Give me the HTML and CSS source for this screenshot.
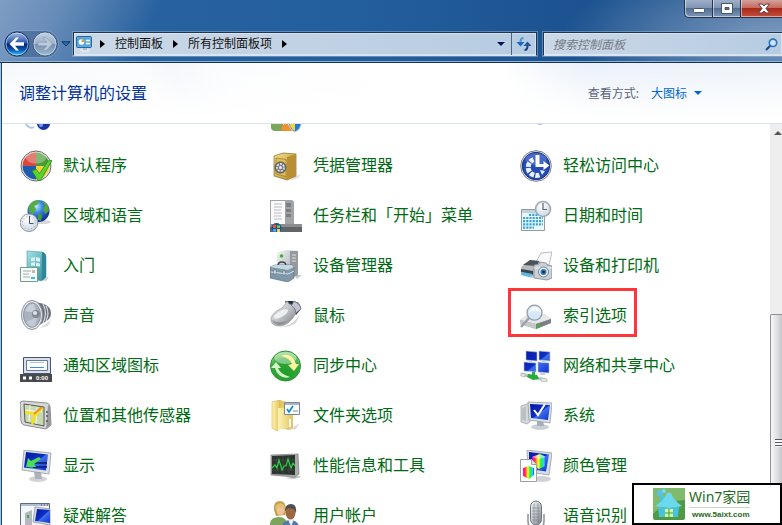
FILE: index.html
```html
<!DOCTYPE html>
<html lang="zh-CN">
<head>
    <meta charset="UTF-8">
    <meta name="viewport" content="width=device-width, initial-scale=1.0">
    <title>所有控制面板项</title>
    <link rel="stylesheet" href="styles.css">
</head>
<body>
    <!-- shared gradients -->
    <svg class="defs" aria-hidden="true">
        <defs>
            <linearGradient id="silver" x1="0" y1="0" x2="1" y2="1"><stop offset="0" stop-color="#f4f5f6"/><stop offset=".5" stop-color="#c2c5c9"/><stop offset="1" stop-color="#777b80"/></linearGradient>
            <linearGradient id="screen" x1="0" y1="0" x2="1" y2="1"><stop offset="0" stop-color="#0618a0"/><stop offset=".5" stop-color="#0c2fc4"/><stop offset=".55" stop-color="#3f6fe8"/><stop offset="1" stop-color="#0a2fd0"/></linearGradient>
            <radialGradient id="globe" cx=".4" cy=".3" r=".7"><stop offset="0" stop-color="#bfe6ff"/><stop offset=".4" stop-color="#3a8be0"/><stop offset="1" stop-color="#0b2c96"/></radialGradient>
            <radialGradient id="face" cx=".4" cy=".3" r=".8"><stop offset="0" stop-color="#fff"/><stop offset="1" stop-color="#c5d3df"/></radialGradient>
            <linearGradient id="gold" x1="0" y1="0" x2="1" y2="1"><stop offset="0" stop-color="#f3df8c"/><stop offset="1" stop-color="#b48a28"/></linearGradient>
            <linearGradient id="folder" x1="0" y1="0" x2="1" y2="0"><stop offset="0" stop-color="#fdf3b6"/><stop offset="1" stop-color="#e3c45a"/></linearGradient>
            <linearGradient id="teal" x1="0" y1="0" x2="1" y2="1"><stop offset="0" stop-color="#a5e3ea"/><stop offset="1" stop-color="#2a8796"/></linearGradient>
            <radialGradient id="green" cx=".5" cy=".75" r=".8"><stop offset="0" stop-color="#1c9c28"/><stop offset=".6" stop-color="#35a83a"/><stop offset="1" stop-color="#a9e39a"/></radialGradient>
            <linearGradient id="rainbow" x1="0" y1="0" x2="1" y2="0"><stop offset="0" stop-color="#f0f"/><stop offset=".2" stop-color="#f33"/><stop offset=".45" stop-color="#ff3"/><stop offset=".65" stop-color="#2e3"/><stop offset=".85" stop-color="#2df"/><stop offset="1" stop-color="#33f"/></linearGradient>
            <linearGradient id="back" x1="0" y1="0" x2="0" y2="1"><stop offset="0" stop-color="#a9bfe6"/><stop offset=".45" stop-color="#2c55ae"/><stop offset=".5" stop-color="#04236f"/><stop offset=".75" stop-color="#0a58b8"/><stop offset="1" stop-color="#3ad4ff"/></linearGradient>
            <linearGradient id="forward" x1="0" y1="0" x2="0" y2="1"><stop offset="0" stop-color="#c4d2e2"/><stop offset=".48" stop-color="#9db2c9"/><stop offset=".52" stop-color="#7390af"/><stop offset="1" stop-color="#a5bcd2"/></linearGradient>
        </defs>
    </svg>

    <div class="window">
        <header class="chrome">
            <div class="window-buttons">
                <button class="win-btn" aria-label="最小化"><svg width="14" height="12"><rect x="1.500" y="5.500" width="11" height="4" rx="1" fill="#fff" stroke="#46566c"/></svg></button>
                <button class="win-btn" aria-label="最大化"><svg width="14" height="12"><path d="M1.500 .5h11v10h-11z M5 4.500v2h4v-2z" fill="#fff" fill-rule="evenodd" stroke="#46566c"/></svg></button>
                <button class="win-btn close" aria-label="关闭"><svg width="14" height="12"><path d="M1.500 1h3.500l2 2 2-2h3.500l-3.500 4.500 3.500 4.500H9L7 8l-2 2H1.500L5 5.500z" fill="#fff" stroke="#5b3d48"/></svg></button>
            </div>
            <div class="nav-row">
                <div class="travel">
                    <button class="travel-btn" aria-label="后退"><svg width="26" height="26"><circle cx="13" cy="13" r="12" fill="url(#back)" stroke="#15305e"/><circle cx="13" cy="13" r="11" fill="none" stroke="#c7daf0" stroke-opacity=".7"/><path d="M5.500 13l6.500-6.500h3L11 11.200h9v3.600h-9l4 4.700h-3z" fill="#fff"/></svg></button>
                    <button class="travel-btn" aria-label="前进"><svg width="26" height="26"><circle cx="13" cy="13" r="12" fill="url(#forward)" stroke="#3f5d80"/><circle cx="13" cy="13" r="11" fill="none" stroke="#d3dfec" stroke-opacity=".7"/><path d="M20.500 13L14 6.500h-3l4 4.700H6v3.600h9l-4 4.700h3z" fill="#bccada" stroke="#7f98b3" stroke-width=".6"/></svg></button>
                </div>
                <button class="history" aria-label="最近的页面"><svg width="10" height="6"><path d="M1 .8h8L5 5z" fill="#2c74b8" stroke="#0d2f5c"/></svg></button>
                <nav class="address">
                    <svg class="cp-icon" width="17" height="17"><ellipse cx="9" cy="14.500" rx="5" ry="2" fill="#dfe5eb"/><path d="M7 11h4v3H7z" fill="#aebdca"/><rect x=".5" y=".5" width="15" height="11" rx="1" fill="#58a9dd" stroke="#27679c"/><circle cx="5.500" cy="6" r="2.800" fill="#fff"/><path d="M5.500 6V3.200A2.800 2.800 0 0 1 8.300 6z" fill="#f39a22"/><path d="M10 4.500h4M10 7.500h4" stroke="#fff" stroke-width="1.500"/></svg>
                    <i class="tri"></i>
                    <a href="#">控制面板</a>
                    <i class="tri"></i>
                    <a href="#">所有控制面板项</a>
                    <i class="tri"></i>
                    <button class="drop" aria-label="以前的位置"><i class="tri-down"></i></button>
                    <button class="refresh" aria-label="刷新"><svg width="16" height="14"><path d="M7.500 1C5 1 4.500 3 4.500 5" fill="none" stroke="#4a9ad5" stroke-width="2"/><path d="M.5 5h8l-4 4.500z" fill="#1d68bd"/><path d="M8.500 13c2.500 0 3-2 3-4" fill="none" stroke="#1a437f" stroke-width="2"/><path d="M7.500 9h8l-4-4.500z" fill="#1d58a8"/></svg></button>
                </nav>
                <div class="search">
                    <input type="text" aria-label="搜索" placeholder="搜索控制面板">
                    <svg width="13" height="13"><path d="M1 12l5-5" stroke="#1b4b94" stroke-width="2.200"/><circle cx="8" cy="4.800" r="3.700" fill="#cfe4f5" stroke="#2a72bb" stroke-width="1.600"/></svg>
                </div>
            </div>
        </header>

        <main class="content">
            <div class="heading">
                <h1>调整计算机的设置</h1>
                <div class="view-by">
                    <label for="view">查看方式:</label>
                    <select id="view"><option>大图标</option></select>
                    <i class="tri-down"></i>
                </div>
            </div>
            <div class="body">
                <div class="items">
                    <div class="item"><svg class="icon" viewBox="0 0 32 32"><path d="M5 22q4 8 9 5" fill="none" stroke="#a9c4ea" stroke-width="2"/><circle cx="23.500" cy="23.500" r="6.500" fill="#1a33a5"/><circle cx="21" cy="25" r="2" fill="#6fa0ee"/></svg></div>
                    <div class="item"><svg class="icon" viewBox="0 0 32 32"><path d="M1 22h12v9H5q-4 0-4-4z" fill="#7da55b"/><path d="M11 29q2-7 7-5l4 7h-9z" fill="#f0912d"/><path d="M19 20h12v5q-1 5-6 7-5-2-6-7z" fill="#2679d0" stroke="#ccc"/><path d="M25 20v11q-4-2-5-6v-5z" fill="#f6d13b"/></svg></div>
                    <div class="item"><svg class="icon" viewBox="0 0 32 32"><ellipse cx="20" cy="23.500" rx="3" ry="1.500" fill="#b9bcc1"/></svg></div>

                    <a class="item" href="#"><svg class="icon" viewBox="0 0 32 32"><circle cx="16" cy="16" r="15" fill="#eee" stroke="#666"/><path d="M16 16V2.500A13.500 13.500 0 0 0 2.500 16z" fill="#d8483c"/><path d="M16 16h13.500A13.500 13.500 0 0 0 16 2.500z" fill="#4c9a35"/><path d="M16 16H2.500A13.500 13.500 0 0 0 16 29.500z" fill="#1e5cae"/><path d="M16 16v13.500A13.500 13.500 0 0 0 29.500 16z" fill="#f5cf3c"/><ellipse cx="16" cy="8" rx="10" ry="5.500" fill="#fff" opacity=".3"/><path d="M12 21l4-2 3.500 4.500L28 11l4-.5-11.500 20h-2.500z" fill="#5cd32c" stroke="#1f8f16" stroke-width=".8"/></svg><span>默认程序</span></a>
                    <a class="item" href="#"><svg class="icon" viewBox="0 0 32 32"><path d="M25 27l6-3-3 4-9 3z" fill="#ccc" opacity=".7"/><path d="M4 6l9-3 13 1v22l-9 4-13-4z" fill="url(#gold)" stroke="#8b6a1e" stroke-width=".7"/><path d="M17 7l9-3v22l-9 4z" fill="#b88f33"/><path d="M6 8l10 1.500v17L6 24z" fill="#dfbd5d" stroke="#9a782a" stroke-width=".7"/><circle cx="10.500" cy="17.500" r="5.500" fill="#777a80" stroke="#4e5158"/><circle cx="10.500" cy="17.500" r="3.600" fill="none" stroke="#e8eaee" stroke-width="1.600" stroke-dasharray="2 1.200"/><circle cx="10.500" cy="17.500" r="1.500" fill="#eee"/></svg><span>凭据管理器</span></a>
                    <a class="item" href="#"><svg class="icon" viewBox="0 0 32 32"><circle cx="16" cy="16" r="15.300" fill="#f5f6f8" stroke="#777c88"/><circle cx="16" cy="16" r="13.700" fill="#254cb2" stroke="#142f79"/><ellipse cx="16" cy="9" rx="11" ry="6" fill="#6d91df" opacity=".45"/><path d="M19.500 25a8 8 0 1 1-6-15.500" fill="none" stroke="#e9effb" stroke-width="5" stroke-dasharray="4.200 1.300"/><path d="M15.500 5h4v9h4v-3l6 4.500-6 4.500v-3h-8z" fill="#fff"/><path d="M20 20l5 1-3 4z" fill="#e9effb"/></svg><span>轻松访问中心</span></a>

                    <a class="item" href="#"><svg class="icon" viewBox="0 0 32 32"><ellipse cx="22" cy="22" rx="9" ry="2" fill="#bbb" opacity=".6"/><circle cx="18.500" cy="11" r="11" fill="url(#globe)"/><path d="M9 6q4-6 10-6l-1 4-4 2 2 3-3 5-4-2z" fill="#58ad3a"/><path d="M22 1q7 2 7 10l-4 3-2-5 2-3z" fill="#54a738"/><path d="M18 13l4 2-1 6-3-1z" fill="#4d9b36"/><circle cx="9" cy="22.700" r="8.800" fill="url(#face)" stroke="#9098a2"/><circle cx="9" cy="22.700" r="6.500" fill="none" stroke="#778899" stroke-dasharray=".7 2.700"/><path d="M9.500 16v7.500h4" fill="none" stroke="#456"/></svg><span>区域和语言</span></a>
                    <a class="item" href="#"><svg class="icon" viewBox="0 0 32 32"><path d="M0 0h21q3 0 3 3v21H0z" fill="#a1a4a7"/><path d="M1 1h14v24H1z" fill="#fafafa"/><path d="M4 4h8M4 7h8M4 10h7M4 13h8M4 16h7M4 19h8" stroke="#b5bdc8"/><path d="M16 3h5v4h-5zM16 9h5v3h-5zM16 14h5v3h-5z" fill="#7b7e82"/><path d="M0 24h32v8H0z" fill="#626568"/><path d="M0 24h32v3H0z" fill="#8c8f92"/><circle cx="6.500" cy="28" r="5" fill="#17519a"/><path d="M3 25q2-1 3 0v3H3z" fill="#e85932"/><path d="M7 25q2 1 3 0v3H7z" fill="#84c63d"/><path d="M3 29h3v3q-2-1-3 0z" fill="#49a9eb"/><path d="M7 29h3v3q-2 1-3 0z" fill="#f8d247"/></svg><span>任务栏和「开始」菜单</span></a>
                    <a class="item" href="#"><svg class="icon" viewBox="0 0 32 32"><path d="M1.500 9.500h23v21h-23z" fill="#eef8fc" stroke="#8f9ba5"/><path d="M2 10h22v3H2z" fill="#c2d2dc"/><path d="M9 14.800h14M3 18h20M3 21.200h20M3 24.400h20M3 27.600h11" stroke="#38a7cf" stroke-width="2.200" stroke-dasharray="2.200 1"/><circle cx="23" cy="9" r="7.500" fill="url(#face)" stroke="#a1a9b2" stroke-width="1.600"/><path d="M23 3v6.500h4" fill="none" stroke="#567" stroke-width="1.200"/></svg><span>日期和时间</span></a>

                    <a class="item" href="#"><svg class="icon" viewBox="0 0 32 32"><path d="M22 30l7-4-3 5z" fill="#ccc"/><path d="M7 1l15 1q4 1 4 5v20l-5 4-14-4z" fill="url(#teal)" stroke="#5aa5b1" stroke-width=".7"/><path d="M22 2q4 1 4 5v20l-4 4z" fill="#2e8796"/><path d="M11 8l4-1v4l-4 .5zM16 7l4 1v4l-4-1zM11 13l4-1v4l-4-.5zM16 12.500l4 1v3l-4-.5z" fill="#e9fbff" opacity=".85"/><path d="M.5 17.500h17v14H.5z" fill="#f7fbf8" stroke="#6ea089"/><path d="M3 21h8M3 24h6M3 27h7" stroke="#a4aaaa"/><path d="M12 20h3v3h-3z" fill="#bbb"/><path d="M11 27h4v2h-4z" fill="#37bff0"/></svg><span>入门</span></a>
                    <a class="item" href="#"><svg class="icon" viewBox="0 0 32 32"><path d="M24 25h8l-5 4z" fill="#ccc"/><path d="M7 2l10-2 11 1v24l-11 4-10-5z" fill="url(#silver)"/><path d="M20 1l8 0v24l-8 3z" fill="#969b9f"/><path d="M22 5h4M22 8h4M22 11h4" stroke="#ddd"/><circle cx="11.500" cy="6" r="1.800" fill="#3eb52c"/><path d="M8 16q0-4 4-4t4 4" fill="none" stroke="#3e4850" stroke-width="1.600"/><path d="M0 17l5-2 17 0 2 2v11l-6 4L0 28z" fill="#7e97a9" stroke="#5d7485" stroke-width=".7"/><path d="M0 17l5-2 17 0 2 2-6 3z" fill="#c5d6e1"/><path d="M1 22l17 2 6-3" fill="none" stroke="#dce6ed"/><path d="M4 20h2v4H4zM13 21h2v4h-2z" fill="#eef2f5" stroke="#56656f" stroke-width=".5"/></svg><span>设备管理器</span></a>
                    <a class="item" href="#"><svg class="icon" viewBox="0 0 32 32"><path d="M16 12l5-9 11-1-3 13z" fill="#f8fafc" stroke="#a7afb6" stroke-width=".8"/><path d="M1 17l9-7 10 1-2 12-6 5-11-4z" fill="#b5bbc0"/><path d="M3 15l7-5 9 1-2 5z" fill="#4c5359"/><path d="M1 19l12 2v4L1 22z" fill="#3b4248"/><path d="M2 22l11 2-4 3-8-2z" fill="#58b8e3"/><path d="M14 15l5-1 1-2 6 1 1 2 5 1v12l-5 2-13-2z" fill="#cbd1d7" stroke="#7a858f" stroke-width=".8"/><path d="M14 18h18" stroke="#eef"/><circle cx="23.500" cy="22" r="5" fill="#eef2f6" stroke="#77828d"/><circle cx="23.500" cy="22" r="3" fill="#2b78bf"/><circle cx="23.500" cy="22" r="1.300" fill="#082a57"/></svg><span>设备和打印机</span></a>

                    <a class="item" href="#"><svg class="icon" viewBox="0 0 32 32"><path d="M20 28l11-8-3 6z" fill="#ccc" opacity=".7"/><path d="M16 2l8 2q7 3 7 9t-6 9l-8 4z" fill="#6c727b"/><path d="M23 4q5 9 0 19M26 6q4 7 0 15" fill="none" stroke="#d8dce3" stroke-width="1.200"/><ellipse cx="12" cy="15" rx="10.500" ry="14.500" fill="#eceef1" stroke="#8a8f96"/><ellipse cx="12" cy="15" rx="8.500" ry="12.300" fill="#a9b2bf" stroke="#8b93a0"/><path d="M5 11q3-8 9-7l2 9z" fill="#c9d0da"/><path d="M6 22q4 6 9 4l2-9z" fill="#c3cad5"/><circle cx="16" cy="14" r="4" fill="#7f8894"/><circle cx="15" cy="13" r="2" fill="#dfe4ea"/></svg><span>声音</span></a>
                    <a class="item" href="#"><svg class="icon" viewBox="0 0 32 32"><path d="M8 27q14 1 23-15l-5 11q-7 5-18 4z" fill="#bbb" opacity=".6"/><path d="M15 1l9 0q7 2 7 8l-5 6-9-9z" fill="#3d4252"/><path d="M1 18Q3 12 12 8q3-3 5-7 2 4 5 4 4 3 4 8-6 12-16 13Q0 26 1 18z" fill="url(#silver)" stroke="#8b8d91" stroke-width=".6"/><path d="M21 5q3-1 2-4 7 2 8 8l-5 4q0-5-5-8z" fill="#c2c5ce" stroke="#5f6270" stroke-width=".6"/><path d="M18 1l3 3 2-3z" fill="#20273e"/><ellipse cx="11" cy="14" rx="8" ry="3" transform="rotate(-30 11 14)" fill="#fff" opacity=".7"/><path d="M2 20q7 4 15 1-4 4-9 4-5-1-6-5z" fill="#6d6f72" opacity=".5"/></svg><span>鼠标</span></a>
                    <a class="item marked" href="#"><svg class="icon" viewBox="0 0 32 32"><path d="M0 20l8-5 16-1 7 5v4l-15 6L0 24z" fill="#9b9fa3"/><path d="M0 20l8-5 16-1 7 5-15 5z" fill="#e6e8ea"/><path d="M0 20l16 4v5L0 24z" fill="#c5c8cb"/><path d="M16 24l15-5v4l-15 6z" fill="#7c7f83"/><path d="M17 25l3-1v3l-3 1z" fill="#3fb834"/><path d="M9 18l-8 9" stroke="#9ca1a9" stroke-width="2.500"/><circle cx="14.500" cy="12.700" r="7.500" fill="#d4e8fa" fill-opacity=".9" stroke="#969eaa" stroke-width="1.300"/><path d="M9 12q2-6 8-5 4 2 4 5-5-2-12 0z" fill="#fff" opacity=".8"/></svg><span>索引选项</span></a>

                    <a class="item" href="#"><svg class="icon" viewBox="0 0 32 32"><path d="M3.500 7.500h27v16h-27z" fill="#d8e1eb" stroke="#46536b"/><path d="M6.500 10.500h21v10h-21z" fill="#fbfdff" stroke="#61799d"/><path d="M10 12.500h14" stroke="#b5bfcb"/><path d="M10 17.500h14" stroke="#3c8fd5"/><path d="M0 24h32v8H0z" fill="#47494d"/><path d="M3 26.500h3v3H3zM9 26.500h3v3H9z" fill="#fff"/><text x="16" y="30" class="clock-text">0:00</text></svg><span>通知区域图标</span></a>
                    <a class="item" href="#"><svg class="icon" viewBox="0 0 32 32"><circle cx="15.500" cy="16" r="15" fill="url(#green)" stroke="#2c8b35"/><ellipse cx="15.500" cy="8" rx="11" ry="6" fill="#fff" opacity=".4"/><path d="M11 6q6-3 11 1 3 3 4 7h3l-5 7-6-6 4-1q-2-6-11-8z" fill="#fff6a1"/><path d="M20 27q-6 2-11-2-3-3-4-7H1l5-6 5 6H8q2 6 12 9z" fill="#d7f4c7"/></svg><span>同步中心</span></a>
                    <a class="item" href="#"><svg class="icon" viewBox="0 0 32 32"><g fill="url(#screen)" stroke="#b4c3dc" stroke-width=".6"><path d="M6 1l11 1v9L6 10zM19 1l11 1v9l-11-1zM4 12l12 1v9L4 21zM18 12l11 1v10l-11-1z"/></g><path d="M9 10l3 1v2H8zM22 10l3 1v2h-4zM21 22l4 1v2h-5z" fill="#c5ccda"/><path d="M1 24l24 6" stroke="#c0cac6" stroke-width="3"/><path d="M8 24l9 1 2 4-6 1-6-3z" fill="#26ad3d"/><path d="M12 22h3v4h-3z" fill="#26ad3d"/><path d="M1 23l4 1v3l-4-1zM21 28l6 1v3l-6-1z" fill="#e5e9e7" stroke="#87988f" stroke-width=".5"/></svg><span>网络和共享中心</span></a>

                    <a class="item" href="#"><svg class="icon" viewBox="0 0 32 32"><path d="M3 1l24 2q3 1 3 4l1 18-5 4-22-4q-3-1-3-4L0 4q0-3 3-3z" fill="#d5d7d9" stroke="#8b8d90"/><path d="M26 29l5-4-1-18-2-2z" fill="#97999d"/><path d="M4 4l20 3v19L5 22z" fill="#c7d9b0" stroke="#55594e"/><path d="M5 10l17 2M10 5l-1 17M17 7l-1 17" stroke="#fbfbe9"/><path d="M5 12l9 2 8-6-7 8-3 8" fill="none" stroke="#f7e313" stroke-width="2.400"/><path d="M14 14l8-7" stroke="#f28c20" stroke-width="1.800"/><path d="M27 11v2M27 15v2M27 20v2" stroke="#555" stroke-width="1.500"/></svg><span>位置和其他传感器</span></a>
                    <a class="item" href="#"><svg class="icon" viewBox="0 0 32 32"><path d="M18 30l12-7-4 6z" fill="#ccc" opacity=".7"/><path d="M2 3l8-3 13 4v24l-5 2-8-3z" fill="#e6c767"/><path d="M2 2l8-2v27l-3 4-5-3z" fill="url(#folder)" stroke="#d4b452" stroke-width=".6"/><path d="M8 8l15-1v20l-15 3z" fill="url(#folder)"/><path d="M19 19h2v8h-2z" fill="#f4f8fa"/><path d="M14.500 2.500h15v12h-15z" fill="#fafcfd" stroke="#7d868f"/><path d="M15 3h14v2H15z" fill="#a8b7c6"/><path d="M17 9l2 3 4-6" fill="none" stroke="#178dce" stroke-width="1.800"/><path d="M23 11h5" stroke="#889"/></svg><span>文件夹选项</span></a>
                    <a class="item" href="#"><svg class="icon" viewBox="0 0 32 32"><path d="M1 6l9-3v19l-3 2-6-2z" fill="#d5d8db" stroke="#9a9ea3" stroke-width=".7"/><path d="M3 8v12M5 7v14" stroke="#8f9399" stroke-width=".7"/><ellipse cx="20" cy="27" rx="9" ry="3" fill="#cbd0d5"/><path d="M17 20h6l1 6h-7z" fill="#a8aeb5"/><path d="M8 2l24 1-2 20-21-3z" fill="#dde2e8" stroke="#8b929b" stroke-width=".7"/><path d="M10 4l20 1-2 15-17-2z" fill="url(#screen)"/><path d="M14 10l4 5 7-11" fill="none" stroke="#fff" stroke-width="2"/></svg><span>系统</span></a>

                    <a class="item" href="#"><svg class="icon" viewBox="0 0 32 32"><ellipse cx="18" cy="29" rx="9" ry="3" fill="#d1d3d7"/><path d="M14 21l7 1 1 7h-7z" fill="#aeb3b9"/><path d="M4 0l27 3-2 21-27-4z" fill="#dee2e7" stroke="#8a9098" stroke-width=".7"/><path d="M6 2l22 2.500-2 16L4 17.500z" fill="url(#screen)"/><path d="M15 13h12M13 17h14" stroke="#091a68" stroke-width="1.500"/><path d="M6 17l2-9 3 3 8-4 2 2-7 5 2 3z" fill="#49e052"/></svg><span>显示</span></a>
                    <a class="item" href="#"><svg class="icon" viewBox="0 0 32 32"><path d="M15 28l14-2 2 1-7 2z" fill="#bbb"/><path d="M1 5l27-1 1 20-4 3-24-2z" fill="#a9adaa" stroke="#777b79" stroke-width=".7"/><path d="M2 6l23-1v20L2 24z" fill="#2b342f"/><path d="M2 10h23M2 15h23M2 20h23M7 6v18M13 6v18M19 6v18" stroke="#46534b" stroke-width=".6"/><path d="M2 18l3-3 2 3 2-8 3 10 2-4h2l2-7 3 9 2-5 2 3" fill="none" stroke="#2bd13c" stroke-width="1.200"/></svg><span>性能信息和工具</span></a>
                    <a class="item" href="#"><svg class="icon" viewBox="0 0 32 32"><ellipse cx="22" cy="29" rx="9" ry="3" fill="#cfd3d8"/><path d="M7 0l25 3-3 22-21-3z" fill="#d8dde4" stroke="#8b929b" stroke-width=".7"/><path d="M9 2l20 2.500-3 17L9 19z" fill="url(#screen)"/><path d="M12 7l8-3 6 3-1 9-6 3-6-4z" fill="url(#rainbow)"/><path d="M12 7l8-3 6 3-7 2z" fill="#fff" opacity=".5"/><path d="M.5 9.500h11l5 5v17H.5z" fill="#fcfdfd" stroke="#9ba1a8"/><path d="M11.500 9.500v5h5" fill="#dfe3e8" stroke="#9ba1a8"/><path d="M3 18l6-2 5 2v7l-5 4-6-3z" fill="url(#rainbow)"/></svg><span>颜色管理</span></a>

                    <a class="item" href="#"><svg class="icon" viewBox="0 0 32 32"><path d="M.5 3.500h29v28H.5z" fill="#f3f7fb" stroke="#616c7a"/><path d="M1 4h28v2H1z" fill="#aebed0"/><path d="M21 5h1M24 5h1M27 5h1" stroke="#345"/><path d="M5 13l7-3v22H5z" fill="#b5b9bf"/><path d="M8 15v3" stroke="#2fb633" stroke-width="2"/><path d="M15 7l15 2v16l-17-3z" fill="#d7dce3" stroke="#858b94" stroke-width=".7"/><path d="M17 9l13 1v13l-15-2z" fill="url(#screen)"/><path d="M12 26l17 2v4H11z" fill="#bec3ca"/></svg><span>疑难解答</span></a>
                    <a class="item" href="#"><svg class="icon" viewBox="0 0 32 32"><path d="M0 32V23q1-6 9-6t8 8v7z" fill="#7ca45b"/><path d="M4 10Q3 1 10 1q6 0 6 9l-1 5-9 1z" fill="#c6a14b"/><ellipse cx="10.500" cy="9.500" rx="4" ry="6" fill="#efc39a"/><path d="M5 8q2-6 7-4 3 1 3 4-4 1-6-1-2 4-4 1z" fill="#dfc073"/><path d="M12 32v-6q1-6 9-6 9 1 9 12z" fill="#557aa8"/><path d="M18 19h6l-3 8z" fill="#e9f0f8"/><ellipse cx="20.500" cy="12.500" rx="5" ry="7" fill="#9d6740"/><path d="M15 11q0-7 6-7t5 9l-2-4-6-1z" fill="#4c4e58"/></svg><span>用户帐户</span></a>
                    <a class="item" href="#"><svg class="icon" viewBox="0 0 32 32"><path d="M8 14v7q0 8 8 8t8-8v-7" fill="none" stroke="#9298a0" stroke-width="1.600"/><rect x="10.500" y="1" width="11" height="24" rx="5.500" fill="url(#silver)" stroke="#72767d"/><path d="M12 8h8M12 11h8M12 14h8M12 17h8M12 20h8M14 4v19M18 4v19" stroke="#7d838d" stroke-width=".6"/><path d="M14 28h4v4h-4z" fill="#8a8f96"/></svg><span>语音识别</span></a>
                </div>
                <div class="scrollbar">
                    <div class="scroll-up"><i class="tri-up"></i></div>
                    <div class="thumb"><i class="grip"></i></div>
                </div>
            </div>
        </main>

        <div class="badge">
            <svg class="badge-logo" viewBox="0 0 32 32"><rect width="32" height="32" rx="2" fill="#4f9a45"/><path d="M0 0h32v12Q14 12 0 26z" fill="#7fba6d"/><circle cx="7" cy="5" r="3" fill="#56c2ec"/><circle cx="11" cy="3" r="2" fill="#7ad6f3"/><path d="M7 8h4v7H7z" fill="#4ec1e7"/><path d="M2 18Q10 14 14 5q2-1 4 0 3 8 11 13-12 4-27 0z" fill="#69d9ee"/><path d="M5 19q11 2 21 0l-1 10H6z" fill="#48c3df"/><path d="M12 21h8v8h-8z" fill="#d5f8a1"/><path d="M16 21v8M12 25h8" stroke="#38a34a"/></svg>
            <div class="badge-text">
                <strong>Win7家园</strong>
                <small>www.5aixt.com</small>
            </div>
        </div>
    </div>
</body>
</html>
```
FILE: styles.css
```css
body, h1, button, input, select {
    margin: 0;
    padding: 0;
    font-family: "Noto Sans", "Noto Sans CJK SC", sans-serif;
}

body, button, input, select {
    font-size: 12px;
}

body {
    overflow: hidden;
}

button {
    border: none;
    background: none;
    display: flex;
    align-items: center;
    justify-content: center;
}

a {
    text-decoration: none;
}

svg {
    display: block;
    flex: none;
}

.defs {
    position: absolute;
    width: 0;
    height: 0;
}

.window {
    position: relative;
    height: 100vh;
    display: flex;
    flex-direction: column;
    overflow: hidden;
}

/* title bar and address row */
.chrome {
    flex: none;
    background: linear-gradient(115deg, #7f9dc4 0, rgba(112, 146, 188, .85) 8%, rgba(90, 130, 180, 0) 20%),
        radial-gradient(ellipse 220px 75px at 100% 60%, #7e9abd, rgba(126, 154, 189, 0)),
        linear-gradient(90deg, #2a64a1 0, #245f9d 45%, #1b528f 75%, #2a5d97 100%);
    border-bottom: 1px solid #15304f;
    box-shadow: inset 0 -1px #8fb4d6;
}

.window-buttons {
    display: flex;
    justify-content: flex-end;
    height: 32px;
}

.win-btn {
    width: 28px;
    height: 18px;
    box-sizing: border-box;
    border: 1px solid #24364f;
    border-top: none;
    border-right: none;
    background: linear-gradient(#9fb0c8 0, #8096b4 45%, #536f95 50%, #7f97b6 100%);
    box-shadow: inset 1px -1px rgba(255, 255, 255, .5);
}

.win-btn:first-child {
    border-bottom-left-radius: 5px;
}

.win-btn.close {
    width: 42px;
    padding-left: 4px;
    background: linear-gradient(#d4a19b 0, #c56a5e 45%, #a92a1c 50%, #c7503a 100%);
}

.nav-row {
    display: flex;
    align-items: center;
    height: 24px;
    padding: 0 0 6px 4px;
}

.travel {
    display: flex;
    gap: 2px;
    border-radius: 14px;
    background: rgba(40, 75, 120, .4);
    box-shadow: 0 0 0 1px rgba(160, 190, 220, .3);
}

.history {
    width: 15px;
}

.address, .search {
    display: flex;
    align-items: center;
    box-sizing: border-box;
    height: 24px;
    border: 1px solid #1e3450;
    border-bottom-color: #d8e4ef;
    background: linear-gradient(90deg, #cbd8e7, #b7cce1);
    box-shadow: inset 0 0 0 1px rgba(255, 255, 255, .4), 0 0 0 1px rgba(150, 185, 220, .5);
}

.address {
    flex: 2;
    padding-left: 2px;
}

.address a {
    color: #111;
    line-height: 20px;
    padding: 0 10px;
}

.cp-icon {
    margin-right: 7px;
}

.tri {
    border: 4px solid transparent;
    border-left: 5px solid #000;
    border-right: none;
}

.tri-down {
    border: 4px solid transparent;
    border-top-color: #00105c;
    border-bottom: none;
}

.tri-up {
    border: 4px solid transparent;
    border-bottom-color: #555;
    border-top: none;
}

.drop {
    width: 20px;
    height: 22px;
    margin-left: auto;
}

.refresh {
    width: 25px;
    height: 22px;
    border-left: 1px solid #51657d;
}

.search {
    flex: none;
    width: 239px;
    margin-left: 6px;
    padding: 0 4px 0 9px;
    border-right: none;
}

.search input {
    flex: 1;
    min-width: 0;
    border: none;
    outline: none;
    background: none;
    font-style: italic;
}

.search input::placeholder {
    color: #747a82;
}

/* page */
.content {
    flex: 1;
    min-height: 0;
    display: flex;
    flex-direction: column;
    background: #fff;
    border-left: 1px solid #9cc6e6;
    box-shadow: inset 1px 0 #24435f;
}

.heading {
    flex: none;
    display: flex;
    align-items: center;
    justify-content: space-between;
    height: 60px;
    margin-left: 1px;
    padding: 0 80px 0 17px;
    border-bottom: 1px solid #d5e3f3;
    background: linear-gradient(rgba(255, 255, 255, 0), #fff 90%),
        linear-gradient(65deg, #f4f7fb 0, #fbfcfe 20%, #f4f6fb 24%, #fbfcfe 30%, #fff 50%, #fff 65%, #eaf1f9 75%, #eef3fa 100%);
}

.heading h1 {
    font-size: 16px;
    font-weight: normal;
    line-height: 24px;
    color: #003399;
}

.view-by {
    display: flex;
    align-items: center;
    color: #5a6478;
}

.view-by select {
    appearance: none;
    border: none;
    background: none;
    color: #0066cc;
    margin: 0 6px 0 12px;
}

.view-by .tri-down {
    border-top-color: #0066cc;
}

.body {
    flex: 1;
    min-height: 0;
    display: flex;
    overflow: hidden;
}

/* the list is scrolled down, so its first row is cut by the heading */
.items {
    flex: 1;
    display: grid;
    grid-template-columns: 250px 250px 1fr;
    grid-auto-rows: 50px;
    align-content: start;
    margin-top: -33px;
    padding-left: 19px;
}

.item {
    position: relative;
    display: flex;
    align-items: center;
    gap: 11px;
    color: #006b12;
    font-size: 16px;
    line-height: 18px;
    white-space: nowrap;
}

.item span {
    padding-bottom: 2px;
}

.icon {
    width: 32px;
    height: 32px;
}

.clock-text {
    font: bold 6px "Liberation Sans", sans-serif;
    fill: #fff;
}

.marked::after {
    content: "";
    position: absolute;
    left: -12px;
    top: -3px;
    width: 123px;
    height: 43px;
    border: 3px solid #fb3737;
}

.scrollbar {
    flex: none;
    width: 12px;
    display: flex;
    flex-direction: column;
    background: #eeeeee;
}

.scroll-up {
    flex: 0 0 190px;
    display: flex;
    justify-content: flex-end;
    align-items: flex-start;
    padding-top: 7px;
    box-sizing: border-box;
}

.thumb {
    flex: 1;
    display: flex;
    align-items: center;
    justify-content: flex-end;
    border: 1px solid #8e9094;
    border-right: none;
    border-bottom: none;
    border-top-left-radius: 2px;
    background: linear-gradient(90deg, #f7f7f7, #dcdde0 60%, #c3c5ca);
}

.grip {
    width: 7px;
    height: 8px;
    margin-top: 46px;
    background: repeating-linear-gradient(#55585d 0, #55585d 1px, #f8f8f8 1px, #f8f8f8 3px);
}

/* site badge over the corner */
.badge {
    position: absolute;
    right: 0;
    bottom: 0;
    width: 150px;
    height: 42px;
    box-sizing: border-box;
    display: flex;
    align-items: center;
    gap: 4px;
    padding-left: 19px;
    border: 2px solid #000;
    background: #fff;
}

.badge-logo {
    width: 32px;
    height: 32px;
}

.badge-text {
    display: flex;
    flex-direction: column;
    color: #1f6a22;
}

.badge-text strong {
    font-size: 14px;
    font-weight: normal;
    line-height: 20px;
    border-bottom: 1px solid #c9d6c9;
}

.badge-text small {
    font: bold 8px/13px "Liberation Sans", sans-serif;
    padding-left: 3px;
}
```
